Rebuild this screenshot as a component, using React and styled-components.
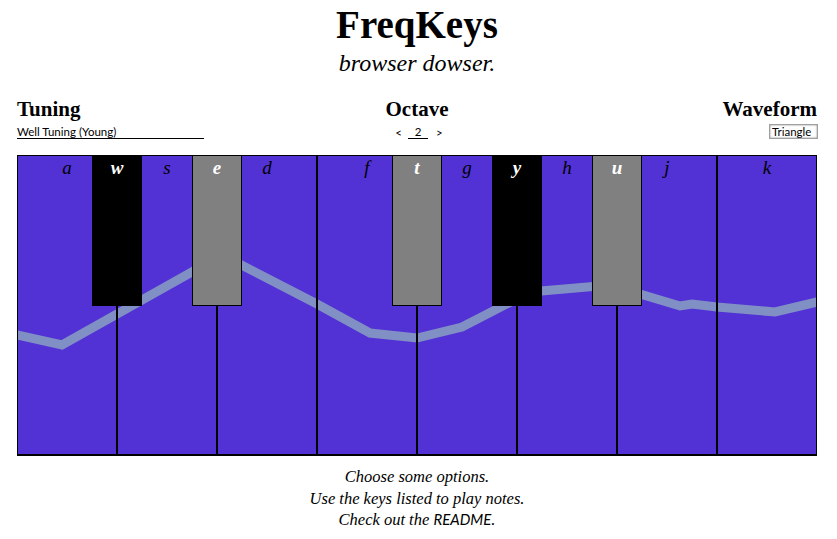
import React from 'react'
import styled, { createGlobalStyle } from 'styled-components'

const GlobalStyle = createGlobalStyle`
    body {
        margin: 0;
        background: #fff;
        color: #000;
    }
`

const Page = styled.main`
    width: 800px;
    margin-left: 17px;
    font-family: "Liberation Serif", "Times New Roman", serif;
`
const Title = styled.h1`
    margin: 0;
    padding-top: 3px;
    font-size: 39px;
    line-height: 44px;
    font-weight: 700;
    text-align: center;
`
const Tagline = styled.p`
    margin: 2px 0 0;
    font-size: 24px;
    line-height: 28px;
    font-style: italic;
    text-align: center;
`
const Controls = styled.section`
    display: grid;
    grid-template-columns: 1fr 1fr 1fr;
    margin-top: 20px;
`
const Control = styled.div`
    display: flex;
    flex-direction: column;
    align-items: ${props => props.$align};
    gap: 3px;
`
const Heading = styled.h2`
    margin: 0;
    font-size: 21px;
    line-height: 24px;
    font-weight: 700;
`
const TuningSelect = styled.select`
    appearance: none;
    width: 187px;
    height: 15px;
    padding: 0;
    border: none;
    border-bottom: 1px solid #000;
    border-radius: 0;
    background: transparent;
    font-family: Lato, "Open Sans", sans-serif;
    font-size: 11.5px;
    line-height: 13px;
    color: #000;
`
const WaveSelect = styled.select`
    appearance: none;
    width: 49px;
    height: 15px;
    margin-right: -1px;
    padding: 0 2px;
    border: 1px solid #a0a0a0;
    border-radius: 0;
    background: #fff;
    box-shadow: inset 0 0 2px rgba(0, 0, 0, 0.55);
    font-family: Lato, "Open Sans", sans-serif;
    font-size: 11.5px;
    line-height: 12px;
    color: #000;
`
const Stepper = styled.div`
    display: flex;
    align-items: flex-end;
    gap: 6px;
    height: 15px;
    margin-left: 4px;
    font-family: Lato, "Open Sans", sans-serif;
    font-size: 11.5px;
`
const Arrow = styled.span`
    line-height: 13px;
    padding: ${props => props.$side === "right" ? "0 0 0 2px" : "0"};
`
const OctaveInput = styled.input`
    width: 20px;
    height: 14px;
    padding: 0;
    border: none;
    border-bottom: 1px solid #000;
    background: transparent;
    text-align: center;
    font-family: inherit;
    font-size: 11.5px;
    color: #000;
`
const Keyboard = styled.section`
    position: relative;
    display: flex;
    height: 301px;
    margin-top: 16px;
    background: #5232d4;
`
const Wave = styled.svg`
    position: absolute;
    inset: 0;
    width: 100%;
    height: 100%;
    z-index: 0;
`
const WhiteKey = styled.div`
    position: relative;
    z-index: 1;
    flex: 1;
    box-sizing: border-box;
    border: 1px solid #000;
    border-bottom-width: 2px;
    padding-top: 2px;
    text-align: center;
`
const BlackKey = styled.div`
    position: absolute;
    z-index: 2;
    top: 0;
    left: ${props => props.$left}px;
    width: 50px;
    height: 151px;
    box-sizing: border-box;
    border: 1px solid #000;
    padding-top: 2px;
    background: ${props => props.$pressed ? "#808080" : "#000"};
    text-align: center;
`
const KeyLabel = styled.span`
    font-size: 19px;
    line-height: 20px;
    font-style: italic;
    font-weight: ${props => props.$black ? 700 : 400};
    color: ${props => props.$black ? "#fff" : "#000"};
`
const Notes = styled.p`
    margin: 10px 0 0;
    font-size: 16.5px;
    line-height: 21.5px;
    font-style: italic;
    text-align: center;
`
const Readme = styled.span`
    font-family: Lato, "Open Sans", sans-serif;
    font-size: 15px;
`

const whiteKeys = ["a", "s", "d", "f", "g", "h", "j", "k"]
const blackKeys = [
    { label: "w", left: 75, pressed: false },
    { label: "e", left: 175, pressed: true },
    { label: "t", left: 375, pressed: true },
    { label: "y", left: 475, pressed: false },
    { label: "u", left: 575, pressed: true },
]
const wavePoints = "0,180 45,190 205,100 300,149 353,178 400,183 445,172 513,137 593,130 663,151 675,149 700,152 758,157 800,147"

export default function App() {
    return (
        <>
            <GlobalStyle />
            <Page>
                <Title>FreqKeys</Title>
                <Tagline>browser dowser.</Tagline>

                <Controls>
                    <Control $align="flex-start">
                        <Heading>Tuning</Heading>
                        <TuningSelect defaultValue="young">
                            <option value="young">Well Tuning (Young)</option>
                        </TuningSelect>
                    </Control>
                    <Control $align="center">
                        <Heading>Octave</Heading>
                        <Stepper>
                            <Arrow>&lt;</Arrow>
                            <OctaveInput type="text" defaultValue="2" />
                            <Arrow $side="right">&gt;</Arrow>
                        </Stepper>
                    </Control>
                    <Control $align="flex-end">
                        <Heading>Waveform</Heading>
                        <WaveSelect defaultValue="triangle">
                            <option value="triangle">Triangle</option>
                        </WaveSelect>
                    </Control>
                </Controls>

                <Keyboard>
                    <Wave viewBox="0 0 800 301" preserveAspectRatio="none">
                        <polyline points={wavePoints} fill="none" stroke="#8190c4" strokeWidth="9" />
                    </Wave>
                    {whiteKeys.map(k => (
                        <WhiteKey key={k}>
                            <KeyLabel>{k}</KeyLabel>
                        </WhiteKey>
                    ))}
                    {blackKeys.map(k => (
                        <BlackKey key={k.label} $left={k.left} $pressed={k.pressed}>
                            <KeyLabel $black>{k.label}</KeyLabel>
                        </BlackKey>
                    ))}
                </Keyboard>

                <Notes>
                    Choose some options.<br />
                    Use the keys listed to play notes.<br />
                    Check out the <Readme>README</Readme>.
                </Notes>
            </Page>
        </>
    )
}
